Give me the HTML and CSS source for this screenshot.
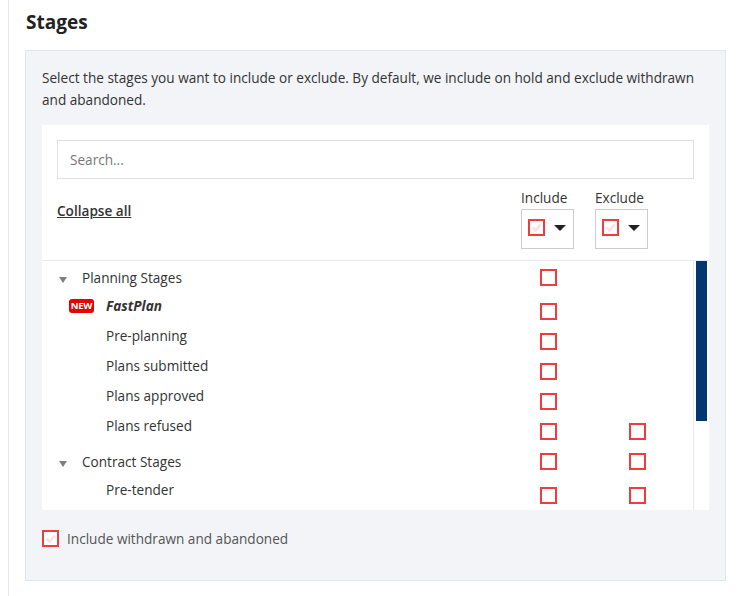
FILE: index.html
```html
<!DOCTYPE html>
<html lang="en">
<head>
    <meta charset="UTF-8">
    <title>Stages</title>
    <link rel="stylesheet" href="styles.css">
</head>
<body>
    <div class="page">
        <h2 class="title">Stages</h2>
        <div class="panel">
            <p class="intro">Select the stages you want to include or exclude. By default, we include on hold and exclude withdrawn and abandoned.</p>
            <div class="picker">
                <div class="picker-top">
                    <input type="text" class="search" placeholder="Search...">
                    <div class="head">
                        <a href="#" class="collapse">Collapse all</a>
                        <div class="head-col">
                            <span>Include</span>
                            <div class="drop">
                                <span class="box faint"><svg viewBox="0 0 13 13"><path d="M2.5 6.5 L5.5 9.5 L10.5 3.5" /></svg></span>
                                <span class="caret"></span>
                            </div>
                        </div>
                        <div class="head-col">
                            <span>Exclude</span>
                            <div class="drop">
                                <span class="box faint"><svg viewBox="0 0 13 13"><path d="M2.5 6.5 L5.5 9.5 L10.5 3.5" /></svg></span>
                                <span class="caret"></span>
                            </div>
                        </div>
                    </div>
                </div>
                <div class="list-wrap">
                    <div class="list">
                        <div class="row group">
                            <div class="label"><span class="arrow"></span>Planning Stages</div>
                            <span class="box"></span>
                        </div>
                        <div class="row child">
                            <div class="label"><span class="badge">NEW</span><b><i>FastPlan</i></b></div>
                            <span class="box"></span>
                        </div>
                        <div class="row child">
                            <div class="label">Pre-planning</div>
                            <span class="box"></span>
                        </div>
                        <div class="row child">
                            <div class="label">Plans submitted</div>
                            <span class="box"></span>
                        </div>
                        <div class="row child">
                            <div class="label">Plans approved</div>
                            <span class="box"></span>
                        </div>
                        <div class="row child">
                            <div class="label">Plans refused</div>
                            <span class="box"></span>
                            <span class="box"></span>
                        </div>
                        <div class="row group spaced">
                            <div class="label"><span class="arrow"></span>Contract Stages</div>
                            <span class="box"></span>
                            <span class="box"></span>
                        </div>
                        <div class="row child">
                            <div class="label">Pre-tender</div>
                            <span class="box"></span>
                            <span class="box"></span>
                        </div>
                    </div>
                    <div class="scrollbar"><div class="thumb"></div></div>
                </div>
            </div>
            <label class="footer">
                <span class="box faint"><svg viewBox="0 0 13 13"><path d="M2.5 6.5 L5.5 9.5 L10.5 3.5" /></svg></span>
                Include withdrawn and abandoned
            </label>
        </div>
    </div>
</body>
</html>
```

FILE: styles.css
```css
body {
    margin: 0;
    font-family: "Open Sans", "Noto Sans", sans-serif;
    font-size: 13.6px;
    color: #333;
    background-color: #fff;
}

.page {
    margin-left: 8px;
    border-left: 1px solid #e4e7eb;
    padding: 10px 12px 0 16px;
    min-height: 586px;
}

.title {
    margin: 0 0 16px 1px;
    font-size: 19px;
    line-height: 24px;
    font-weight: 700;
    color: #222;
}

.panel {
    background-color: #f2f4f8;
    border: 1px solid #e1e6ee;
    padding: 16px 16px 16px 16px;
}

.intro {
    margin: 0 0 14px 0;
    line-height: 22px;
}

.picker {
    background-color: #fff;
}

.picker-top {
    padding: 15px 15px 11px 15px;
    border-bottom: 1px solid #e6e9ee;
}

.search {
    display: block;
    box-sizing: border-box;
    width: 100%;
    height: 39px;
    padding: 0 12px;
    border: 1px solid #dcdfe3;
    font-family: inherit;
    font-size: 13.6px;
    color: #333;
    outline: none;
}

.search::placeholder {
    color: #777;
}

.head {
    display: flex;
    align-items: flex-start;
    margin-top: 10px;
    padding-right: 46px;
}

.collapse {
    flex: 1;
    margin-top: 13px;
    line-height: 18px;
    color: #333;
    font-weight: 600;
}

.head-col {
    display: flex;
    flex-direction: column;
    width: 53px;
    margin-left: 21px;
    line-height: 18px;
}

.drop {
    box-sizing: border-box;
    display: flex;
    align-items: center;
    height: 40px;
    margin-top: 2px;
    padding: 0 0 3px 6px;
    border: 1px solid #cccccc;
}

.caret {
    width: 0;
    height: 0;
    margin-left: 9px;
    border-left: 6.5px solid transparent;
    border-right: 6.5px solid transparent;
    border-top: 6px solid #222;
}

.box {
    box-sizing: border-box;
    display: block;
    width: 17px;
    height: 17px;
    border: 2px solid #f03c3c;
    background-color: #fff;
}

.box svg {
    display: block;
    width: 13px;
    height: 13px;
    fill: none;
    stroke: #fde0e0;
    stroke-width: 2.6;
}

.list-wrap {
    display: flex;
    height: 249px;
}

.list {
    flex: 1;
    padding-top: 3px;
    overflow: hidden;
}

.row {
    display: grid;
    grid-template-columns: 426px 17px 17px;
    column-gap: 72px;
    align-items: start;
}

.row .label {
    display: flex;
    align-items: center;
    line-height: 28px;
    white-space: nowrap;
}

.group {
    height: 28px;
}

.group .label {
    padding-left: 17px;
}

.group .box {
    margin-top: 5px;
}

.spaced {
    margin-top: 6px;
}

.child {
    height: 30px;
}

.child .label {
    padding-left: 64px;
}

.child .box {
    margin-top: 11px;
}

.arrow {
    width: 0;
    height: 0;
    margin: 3px 15px 0 0;
    border-left: 4px solid transparent;
    border-right: 4px solid transparent;
    border-top: 6px solid #808080;
}

.badge {
    margin-left: -37px;
    margin-right: 12px;
    width: 25px;
    height: 14px;
    line-height: 14px;
    border-radius: 3px;
    background-color: #e60000;
    color: #fff;
    font-size: 9.5px;
    font-weight: 700;
    text-align: center;
    letter-spacing: -0.2px;
}

.scrollbar {
    width: 11px;
    padding: 0 2px;
    border-left: 1px solid #e6e9ee;
}

.thumb {
    height: 160px;
    background-color: #033770;
}

.footer {
    display: flex;
    align-items: center;
    margin: 20px 0 17px 0;
    line-height: 17px;
    color: #555;
}

.footer .box {
    margin-right: 8px;
}
```
